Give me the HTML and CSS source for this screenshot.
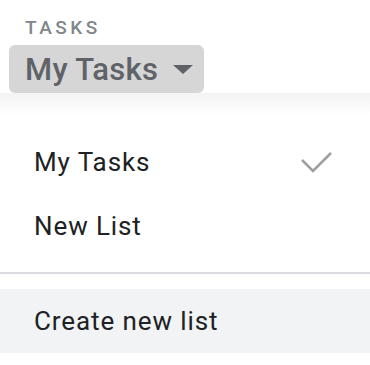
FILE: index.html
```html
<!DOCTYPE html>
<html lang="en">
<head>
  <meta charset="UTF-8">
  <meta name="viewport" content="width=device-width, initial-scale=1.0">
  <title>Tasks</title>
  <link rel="stylesheet" href="styles.css">
</head>
<body>
  <header class="tasks-header">
    <div class="tasks-label">TASKS</div>
    <button class="list-switcher">
      <span>My Tasks</span>
      <span class="caret"></span>
    </button>
  </header>
  <div class="header-fade"></div>

  <!-- list menu -->
  <div class="list-menu">
    <div class="menu-item">
      <span>My Tasks</span>
      <svg class="check" width="32" height="24" viewBox="0 0 32 24">
        <polyline points="2,10 13,21 31,3" fill="none" stroke="#9e9e9e" stroke-width="2.5"/>
      </svg>
    </div>
    <div class="menu-item">
      <span>New List</span>
    </div>
    <div class="divider"></div>
    <div class="menu-item active">
      <span>Create new list</span>
    </div>
  </div>
</body>
</html>
```

FILE: styles.css
```css
body {
  font-family: Roboto, "Liberation Sans", sans-serif;
  background-color: white;
  color: #202124;
  margin: 0;
}
.tasks-header {
  padding-top: 18px;
}
.tasks-label {
  height: 20px;
  line-height: 20px;
  padding-left: 25px;
  font-size: 19px;
  font-weight: 500;
  letter-spacing: 3.5px;
  color: #80868b;
}
.list-switcher {
  display: flex;
  align-items: center;
  gap: 15px;
  width: 195px;
  height: 48px;
  margin: 7px 0 0 9px;
  padding: 0 0 0 16px;
  border: none;
  border-radius: 6px;
  background: #d6d6d6;
  font-family: inherit;
  font-size: 31px;
  font-weight: 500;
  letter-spacing: 0.3px;
  color: #5f6368;
  cursor: pointer;
}
.caret {
  width: 0;
  height: 0;
  border-left: 10px solid transparent;
  border-right: 10px solid transparent;
  border-top: 9px solid #5f6368;
}
.header-fade {
  height: 22px;
  background: linear-gradient(#f4f4f4, #ffffff);
}
.list-menu {
  padding-top: 15px;
}
.menu-item {
  display: flex;
  align-items: center;
  justify-content: space-between;
  height: 64px;
  padding: 0 38px 0 34px;
  font-size: 26px;
  letter-spacing: 0.9px;
}
.menu-item.active {
  background: #f1f3f4;
}
.divider {
  height: 2px;
  margin: 14px 0 15px;
  background: #dadce0;
}
```
